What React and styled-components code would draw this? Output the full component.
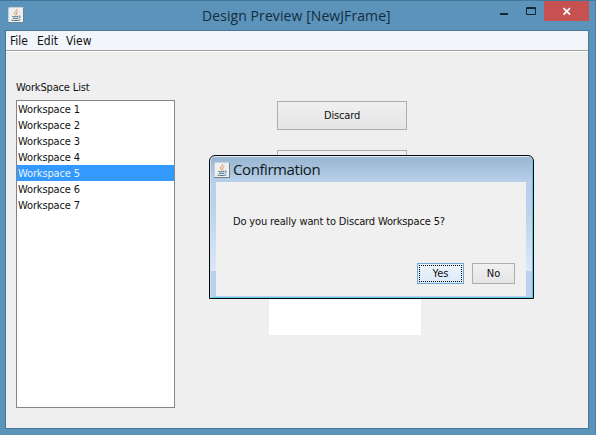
import React from "react";
import styled, { createGlobalStyle } from "styled-components";

const Global = createGlobalStyle`
  * { box-sizing: border-box; }
  body { margin: 0; overflow: hidden; }
`;

const UI_FONT = `"DejaVu Sans Condensed", "DejaVu Sans", sans-serif`;
const TITLE_FONT = `"Open Sans", "Noto Sans", sans-serif`;

const Label = styled.span`
  display: inline-block;
  white-space: pre;
  letter-spacing: ${(p) => p.$track ?? -0.15}px;
`;

const Desktop = styled.div`
  position: relative;
  width: 596px;
  height: 435px;
  display: flex;
  flex-direction: column;
  padding: 0 6px 6px 5px;
  background: #5b93bb;
  border-top: 1px solid #44779c;
  border-right: 1px solid #4a7fa5;
  font: 11px/16px ${UI_FONT};
  font-stretch: condensed;
  color: #111;
`;

const TitleBar = styled.header`
  display: grid;
  grid-template-columns: 100px 1fr 100px;
  height: 29px;
  padding-left: 3px;
  flex: none;
`;

const AppIcon = styled.svg`
  display: block;
  width: 16px;
  height: 16px;
  margin-top: ${(p) => p.$top}px;
  flex: none;
`;

const WindowTitle = styled.h1`
  margin: 0;
  padding: 5px 0 0 94px;
  font: 14px/20px ${TITLE_FONT};
  color: #142c3c;
  white-space: nowrap;
`;

const Controls = styled.div`
  display: flex;
  justify-content: flex-end;
`;

const ControlIcon = styled.svg`
  display: block;
  flex: none;
  width: ${(p) => p.$w}px;
  height: 20px;
  background: ${(p) => p.$bg || "transparent"};
`;

const Client = styled.main`
  display: flex;
  flex-direction: column;
  width: 584px;
  height: 399px;
  background: #efefef;
  border: 1px solid #487796;
`;

const MenuBar = styled.nav`
  display: flex;
  height: 21px;
  flex: none;
  padding: 2px 0 0 4px;
  gap: 9px;
  background: #f2f6fa;
  border-bottom: 1px solid #fff;
  box-shadow: inset 0 -1px #a0a0a0;
  font-size: 12px;
`;

const MenuItem = styled.span`
  width: ${(p) => p.$w}px;
  white-space: nowrap;
`;

const Body = styled.div`
  display: flex;
  padding-left: 10px;
`;

const ListColumn = styled.section`
  width: 159px;
  padding-top: 28px;
`;

const List = styled.ul`
  height: 308px;
  margin: 4px 0 0;
  padding: 0;
  list-style: none;
  background: #fff;
  border: 1px solid #82858c;
`;

const ListRow = styled.li`
  height: 16px;
  padding: 1px 0 0 1px;
  line-height: 16px;
  background: ${(p) => (p.$selected ? "#3399ff" : "transparent")};
  color: ${(p) => (p.$selected ? "#e4f2ff" : "#111")};
`;

const ActionColumn = styled.section`
  display: flex;
  flex-direction: column;
  align-items: flex-start;
  width: 152px;
  margin-left: 94px;
  padding-top: 49px;
`;

const Button = styled.button`
  display: flex;
  align-items: center;
  justify-content: center;
  width: ${(p) => p.$w}px;
  height: ${(p) => p.$h}px;
  margin: 0 0 ${(p) => p.$gap || 0}px ${(p) => p.$indent || 0}px;
  padding: 0;
  border: 1px solid ${(p) => (p.$focused ? "#6fa8d6" : "#adadad")};
  background: ${(p) =>
    p.$focused
      ? "linear-gradient(#ebf4fc, #dcebfa)"
      : "linear-gradient(#f0f0f0, #e5e5e5)"};
  font: inherit;
  color: #111;
`;

const FocusRing = styled.span`
  display: flex;
  align-items: center;
  justify-content: center;
  width: 43px;
  height: 17px;
  border: 1px dotted #000;
`;

const OutputBox = styled.div`
  width: 152px;
  height: 87px;
  background: #fff;
`;

const Dialog = styled.div`
  position: absolute;
  left: 209px;
  top: 154px;
  width: 325px;
  height: 144px;
  display: flex;
  flex-direction: column;
  padding: 0 6px 2px;
  border: 1px solid #05090e;
  border-radius: 6px 6px 0 0;
  background:
    linear-gradient(#b9d1ea, #b9d1ea) 0 115px / 100% 30px no-repeat,
    linear-gradient(#98b4d0 0, #b7cfe8 25px, #b9d1ea 50px, #dce8f5 114px);
  box-shadow: inset 0 1px #dfeaf5, inset 1px 0 #cfe0f1, inset -1px -1px #58cbe4;
`;

const DialogTitle = styled.header`
  display: flex;
  height: 26px;
  flex: none;
  margin-left: -2px;
`;

const DialogName = styled.h2`
  margin: 0;
  padding: 3px 0 0 3px;
  font: 15px/20px ${TITLE_FONT};
  color: #101820;
`;

const DialogBody = styled.div`
  flex: 1;
  display: flex;
  flex-direction: column;
  width: 310px;
  padding: 32px 11px 12px 17px;
  background: #f0f0f0;
`;

const DialogActions = styled.div`
  display: flex;
  justify-content: flex-end;
  gap: 8px;
  margin-top: auto;
`;

function JavaIcon({ top }) {
  return (
    <AppIcon viewBox="0 0 16 16" $top={top}>
      <rect x=".5" y=".5" width="15" height="15" rx="1" fill="#edf0f2" stroke="#c5cfd6" />
      <path d="M0 15.5h16M15.5 1v14" stroke="#71818d" />
      <path d="M8.8 2.2c.4 1.8-3 2.6-2.4 4.2.3.9 1.2 1.2 1.1 2M10.3 4.5C8.4 5.2 8 6 8.7 6.9c.4.6.2 1-.3 1.5" fill="none" stroke="#e1873f" strokeWidth="1" />
      <path d="M4.2 9.4c1.2.5 4.4.5 6 0M10.8 9c2.4-.3 1.6 1.8-.2 2M5 11.2c1.4.5 3.6.5 5 0M3.4 13c2.3.8 6.9.7 9-.2" fill="none" stroke="#4c6f88" />
    </AppIcon>
  );
}

const workspaces = [1, 2, 3, 4, 5, 6, 7];

export default function App() {
  return (
    <Desktop>
      <Global />
      <TitleBar>
        <JavaIcon top={6} />
        <WindowTitle><Label $track={0.08}>Design Preview [NewJFrame]</Label></WindowTitle>
        <Controls>
          <ControlIcon $w={26} viewBox="0 0 26 20">
            <rect x="8" y="12" width="8" height="2" fill="#102838" />
          </ControlIcon>
          <ControlIcon $w={26} viewBox="0 0 26 20">
            <path d="M8.5 6.5h9v7h-9zM8 7.5h10" fill="none" stroke="#102838" />
          </ControlIcon>
          <ControlIcon $w={45} $bg="#c75050" viewBox="0 0 45 20">
            <path d="M19.5 7.2l6.5 6.5M26 7.2l-6.5 6.5" stroke="#fff" strokeWidth="1.7" />
          </ControlIcon>
        </Controls>
      </TitleBar>
      <Client>
        <MenuBar>
          <MenuItem $w={18}>File</MenuItem>
          <MenuItem $w={20}>Edit</MenuItem>
          <MenuItem $w={26}>View</MenuItem>
        </MenuBar>
        <Body>
          <ListColumn>
            <Label>WorkSpace List</Label>
            <List>
              {workspaces.map((n) => (
                <ListRow key={n} $selected={n === 5}>
                  <Label>Workspace {n}</Label>
                </ListRow>
              ))}
            </List>
          </ListColumn>
          <ActionColumn>
            <Button $w={130} $h={29} $gap={20} $indent={8}><Label>Discard</Label></Button>
            <Button $w={130} $h={29} $gap={69} $indent={8} aria-label="Action" />
            <OutputBox />
          </ActionColumn>
        </Body>
      </Client>
      <Dialog role="dialog">
        <DialogTitle>
          <JavaIcon top={6} />
          <DialogName><Label $track={-0.42}>Confirmation</Label></DialogName>
        </DialogTitle>
        <DialogBody>
          <Label>Do you really want to Discard Workspace 5?</Label>
          <DialogActions>
            <Button $w={47} $h={21} $focused><FocusRing>Yes</FocusRing></Button>
            <Button $w={43} $h={21}>No</Button>
          </DialogActions>
        </DialogBody>
      </Dialog>
    </Desktop>
  );
}
